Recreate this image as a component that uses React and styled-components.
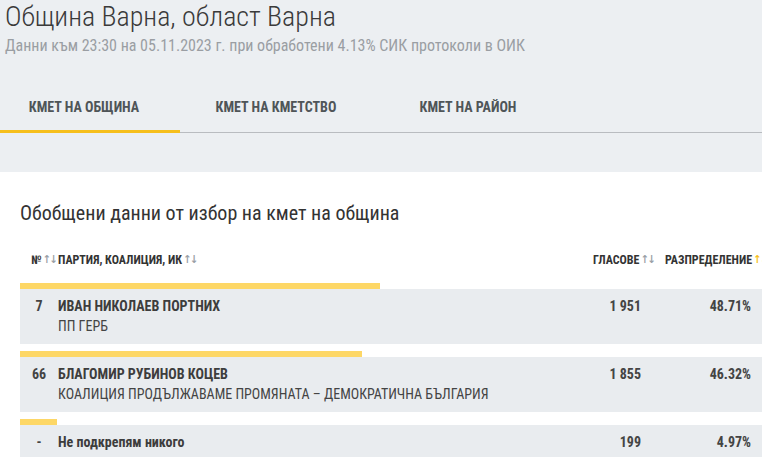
import React from "react";
import styled, { createGlobalStyle } from "styled-components";

const GlobalStyle = createGlobalStyle`
  html, body {
    margin: 0;
    padding: 0;
    background: #ffffff;
    overflow: hidden;
  }
  body {
    font-family: "Roboto Condensed", "Liberation Sans Narrow", "DejaVu Sans Condensed", Roboto, sans-serif;
    color: #333;
  }
`;

const Top = styled.div`
  background: #eceff2;
  padding-top: 2px;
  height: 172px;
  box-sizing: border-box;
`;

const Title = styled.h1`
  margin: 0 0 0 5px;
  font-size: 28px;
  font-weight: 300;
  line-height: 30px;
  color: #3a3a3a;
`;

const Sub = styled.div`
  margin: 4px 0 0 5px;
  font-size: 16px;
  line-height: 20px;
  color: #9a9ea3;
`;

const Tabs = styled.div`
  display: flex;
  gap: 12px;
  margin-top: 33px;
  border-bottom: 1px solid #b9bcc0;
`;

const Tab = styled.div`
  width: 180px;
  height: 44px;
  display: flex;
  align-items: center;
  justify-content: center;
  font-size: 14px;
  font-weight: 700;
  color: #4f5558;
  box-sizing: border-box;
  border-bottom: 3px solid ${(p) => (p.active ? "#f6bf1d" : "transparent")};
  margin-bottom: -1px;
  padding: 0 12px 6px 0;
`;

const Body = styled.div`
  padding: 28px 0 0 20px;
`;

const Heading = styled.h2`
  margin: 0;
  font-size: 20px;
  font-weight: 400;
  line-height: 26px;
  color: #333;
`;

const Table = styled.div`
  width: 739px;
  margin-top: 21px;
`;

const Grid = styled.div`
  display: grid;
  grid-template-columns: 38px 1fr 100px 121px;
  align-items: start;
`;

const HeadRow = styled(Grid)`
  width: 742px;
  height: 26px;
  align-items: center;
  margin-bottom: 10px;
  font-size: 12px;
  font-weight: 700;
  color: #333;
  text-transform: uppercase;
`;

const HeadCell = styled.div`
  text-align: ${(p) => p.align || "left"};
  white-space: nowrap;
  padding-left: ${(p) => p.pl || 0}px;
  margin-right: ${(p) => p.mr || 0}px;
`;

const Sort = styled.span`
  font-size: 11px;
  font-weight: 700;
  margin-left: 1px;
  letter-spacing: -1.5px;
  vertical-align: 1px;
  color: #9aa0a6;
  & b {
    color: ${(p) => (p.on ? "#333" : "#9aa0a6")};
  }
  & i {
    font-style: normal;
    color: ${(p) => (p.on ? "#f6bf1d" : "#9aa0a6")};
  }
`;

const Entry = styled.div`
  margin-bottom: 7px;
`;

const Bar = styled.div`
  height: 6px;
  background: #fdd766;
`;

const Row = styled(Grid)`
  background: #e9ecef;
  width: 742px;
  padding: 7px 0 8px;
  font-size: 14px;
  line-height: 20px;
`;

const Num = styled.div`
  text-align: center;
  font-weight: 700;
  color: #444;
`;

const Name = styled.div`
  font-weight: 700;
  color: #3d3d3d;
`;

const Party = styled.div`
  font-weight: 400;
  color: #444;
`;

const Value = styled.div`
  text-align: right;
  font-weight: 700;
  color: #444;
  padding-right: ${(p) => p.pr || 0}px;
`;

const data = [
  { n: "7", name: "ИВАН НИКОЛАЕВ ПОРТНИХ", party: "ПП ГЕРБ", votes: "1 951", pct: 48.71 },
  {
    n: "66",
    name: "БЛАГОМИР РУБИНОВ КОЦЕВ",
    party: "КОАЛИЦИЯ ПРОДЪЛЖАВАМЕ ПРОМЯНАТА – ДЕМОКРАТИЧНА БЪЛГАРИЯ",
    votes: "1 855",
    pct: 46.32,
  },
  { n: "-", name: "Не подкрепям никого", votes: "199", pct: 4.97 },
];

const Arrows = ({ on }) => (
  <Sort on={on}>
    <i>↑</i>
    <b>↓</b>
  </Sort>
);

export default function App() {
  return (
    <>
      <GlobalStyle />
      <Top>
        <Title>Община Варна, област Варна</Title>
        <Sub>Данни към 23:30 на 05.11.2023 г. при обработени 4.13% СИК протоколи в ОИК</Sub>
        <Tabs>
          <Tab active>КМЕТ НА ОБЩИНА</Tab>
          <Tab>КМЕТ НА КМЕТСТВО</Tab>
          <Tab>КМЕТ НА РАЙОН</Tab>
        </Tabs>
      </Top>
      <Body>
        <Heading>Обобщени данни от избор на кмет на община</Heading>
        <Table>
          <HeadRow>
            <HeadCell pl={11}>
              №<Arrows />
            </HeadCell>
            <HeadCell>
              Партия, коалиция, ИК<Arrows />
            </HeadCell>
            <HeadCell align="right" mr={-13}>
              Гласове<Arrows />
            </HeadCell>
            <HeadCell pl={24}>
              Разпределение<Arrows on />
            </HeadCell>
          </HeadRow>
          {data.map((d) => (
            <Entry key={d.n}>
              <Bar style={{ width: `${d.pct}%` }} />
              <Row>
                <Num>{d.n}</Num>
                <div>
                  <Name>{d.name}</Name>
                  {d.party && <Party>{d.party}</Party>}
                </div>
                <Value>{d.votes}</Value>
                <Value pr={11}>{d.pct.toFixed(2)}%</Value>
              </Row>
            </Entry>
          ))}
        </Table>
      </Body>
    </>
  );
}
